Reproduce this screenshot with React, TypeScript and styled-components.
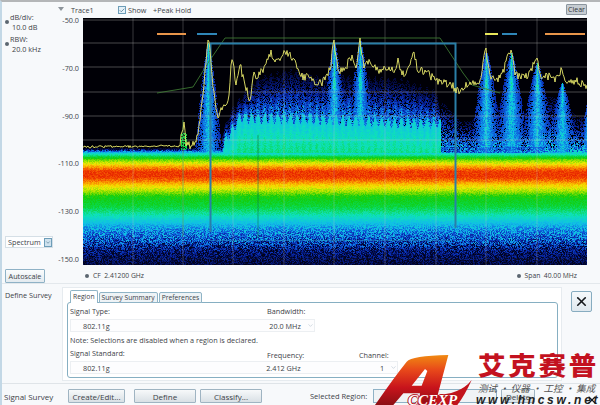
import React, { useEffect, useMemo, useRef } from "react";
import styled, { createGlobalStyle } from "styled-components";
import { Check, ChevronDown, X } from "lucide-react";

const Global = createGlobalStyle`
  html, body { margin: 0; padding: 0; background: #f4f7fa; }
  #root { width: 600px; height: 405px; overflow: hidden; }
  * { box-sizing: border-box; }
`;

const Page = styled.div`
  position: relative;
  width: 600px;
  height: 405px;
  overflow: hidden;
  display: flex;
  flex-direction: column;
  background: #f7f9fb;
  border-top: 2px solid #b4b6b8;
  border-left: 2px solid #c3d8e6;
  font-family: "Open Sans", "Noto Sans", sans-serif;
  font-size: 7.25px;
  color: #3c4248;
`;

const Chart = styled.section`
  display: grid;
  grid-template-columns: 54px 27px 504px 13px;
  grid-template-rows: 16px 247px 18px;
  height: 281px;
`;

const Controls = styled.div`
  grid-column: 1;
  grid-row: 1 / 4;
  display: flex;
  flex-direction: column;
  padding: 11px 0 0 3px;
`;

const Setting = styled.div`
  position: relative;
  padding-left: 5px;
  margin-bottom: 3px;
  line-height: 9.5px;
  &::before {
    content: "";
    position: absolute;
    left: 0;
    top: 7px;
    width: 4px;
    height: 4px;
    border-radius: 50%;
    background: #5b6670;
  }
`;

const SettingValue = styled.div`
  padding-left: 2px;
`;

const ViewSelect = styled.div`
  margin-top: auto;
  margin-bottom: 21px;
  width: 48px;
  height: 12px;
  display: flex;
  align-items: center;
  justify-content: space-between;
  padding-left: 2px;
  background: #fdfeff;
  border: 1px solid #d5dfe6;
`;

const MiniDrop = styled.span`
  width: 8px;
  height: 9px;
  display: flex;
  align-items: center;
  justify-content: center;
  background: #cfe2ee;
  border: 1px solid #6d9db8;
  color: #2d5c78;
`;

const Autoscale = styled.button`
  width: 40px;
  height: 14px;
  margin-bottom: 0;
  padding: 0;
  font: inherit;
  color: inherit;
  background: linear-gradient(#fbfcfd, #e3eaef);
  border: 1px solid #8fb2c6;
  border-radius: 1px;
`;

const TraceBar = styled.div`
  grid-column: 2 / 4;
  grid-row: 1;
  display: flex;
  align-items: center;
  padding-left: 2px;
  height: 16px;
`;

const Caret = styled.span`
  width: 0;
  height: 0;
  border-left: 3px solid transparent;
  border-right: 3px solid transparent;
  border-top: 4px solid #8d949b;
  margin-right: 7px;
  margin-top: -3px;
`;

const TraceName = styled.span`
  width: 47px;
`;

const CheckBox = styled.span`
  width: 8px;
  height: 8px;
  display: flex;
  align-items: center;
  justify-content: center;
  border: 1px solid #6d9db8;
  background: #e3f0f8;
  color: #2d5c78;
  margin-right: 2px;
`;

const ShowLabel = styled.span`
  width: 25px;
`;

const ClearCell = styled.div`
  grid-column: 3;
  grid-row: 1;
  justify-self: end;
  align-self: end;
  margin-bottom: 3px;
`;

const ClearButton = styled.button`
  display: block;
  width: 21px;
  height: 11px;
  padding: 0;
  font: inherit;
  font-size: 7px;
  line-height: 9px;
  color: #2f3438;
  background: #c6ccd2;
  border: 1px solid #8b959e;
  border-radius: 1px;
`;

const Axis = styled.div`
  grid-column: 2;
  grid-row: 2;
  display: flex;
  flex-direction: column;
  justify-content: space-between;
  align-items: flex-end;
  margin: -3px 0 1px;
  padding-right: 4px;
  line-height: 10px;
`;

const Plot = styled.div`
  grid-column: 3;
  grid-row: 2;
  position: relative;
  width: 504px;
  height: 247px;
  background: #000;
  overflow: hidden;
`;

const HeatCanvas = styled.canvas`
  display: block;
  width: 504px;
  height: 247px;
  filter: blur(0.35px);
`;

const Overlay = styled.svg`
  position: absolute;
  inset: 0;
`;

const PlotFooter = styled.div`
  grid-column: 3;
  grid-row: 3;
  display: flex;
  justify-content: space-between;
  align-items: center;
  padding: 3px 10px 0 2px;
  font-size: 6.75px;
`;

const FooterItem = styled.span`
  display: flex;
  align-items: center;
  gap: 4px;
  &::before {
    content: "";
    width: 4px;
    height: 4px;
    border-radius: 50%;
    background: #5b6670;
  }
`;

const Survey = styled.section`
  display: flex;
  height: 100px;
  border-top: 1px solid #e3e8ec;
`;

const SurveyTitle = styled.div`
  width: 60px;
  padding: 6px 0 0 3px;
`;

const Card = styled.div`
  width: 500px;
  height: 94px;
  margin-top: 3px;
  padding: 2px 3px 0 4px;
  background: #fff;
  border: 1px solid #e6ebef;
`;

const Tabs = styled.div`
  display: flex;
  gap: 1px;
  padding-left: 3px;
  height: 12px;
  position: relative;
  z-index: 1;
  font-size: 6.75px;
`;

const Tab = styled.span<{ $active?: boolean }>`
  height: ${(p) => (p.$active ? "13px" : "11px")};
  margin-top: ${(p) => (p.$active ? "0" : "2px")};
  padding: 0 2px;
  line-height: ${(p) => (p.$active ? "12px" : "10px")};
  background: ${(p) => (p.$active ? "#fff" : "#eef3f6")};
  border: 1px solid #8fb4c6;
  border-bottom: ${(p) => (p.$active ? "0" : "1px solid #8fb4c6")};
  border-radius: 2px 2px 0 0;
`;

const TabPanel = styled.div`
  height: 76px;
  padding: 3px 3px 0 2px;
  border: 1px solid #86afc2;
  border-radius: 3px;
  background: #fff;
  display: flex;
  flex-direction: column;
`;

const LabelRow = styled.div<{ $low?: boolean }>`
  display: grid;
  grid-template-columns: 197px 92px 60px;
  height: 11px;
  line-height: 11px;
  & > span:nth-child(2), & > span:nth-child(3) {
    position: relative;
    top: ${(p) => (p.$low ? "2px" : "0")};
  }
`;

const ValueRow = styled.div<{ $w: number }>`
  width: ${(p) => p.$w}px;
  height: 13px;
  margin-top: 2px;
  display: flex;
  align-items: center;
  padding-left: 12px;
  border: 1px solid #eceff2;
  background: #fdfdfe;
`;

const FieldValue = styled.span<{ $w: number }>`
  width: ${(p) => p.$w}px;
`;

const DropArrow = styled.span`
  display: flex;
  color: #9fb2c0;
`;

const Note = styled.div`
  margin: 3px 0 2px;
  line-height: 11px;
`;

const CloseButton = styled.button`
  width: 21px;
  height: 21px;
  margin: 7px 0 0 9px;
  padding: 0;
  display: flex;
  align-items: center;
  justify-content: center;
  color: #15181b;
  background: linear-gradient(#f6f9fb, #dfe8ee);
  border: 1px solid #87acc0;
  border-radius: 2px;
`;

const BottomBar = styled.footer`
  flex: 1;
  display: flex;
  align-items: center;
  border-top: 1px solid #dfe4e8;
  padding: 3px 0 0 2px;
`;

const BarTitle = styled.span`
  width: 64px;
  font-size: 8px;
`;

const Action = styled.button<{ $w: number; $gap: number }>`
  width: ${(p) => p.$w}px;
  height: 14px;
  margin-right: ${(p) => p.$gap}px;
  padding: 0;
  font: inherit;
  font-size: 8px;
  color: #3c4248;
  background: linear-gradient(#f7f9fa, #d9e0e5);
  border: 1px solid #9fb4c2;
  border-radius: 1px;
`;

const RegionLabel = styled.span`
  margin-left: 48px;
  width: 63px;
  font-size: 7.5px;
`;

const RegionBox = styled.span`
  width: 124px;
  height: 14px;
  border: 1px solid #8fb2c6;
  background: #f0f3f5;
  margin-right: 4px;
`;

const Brand = styled.div`
  position: absolute;
  left: 368px;
  top: 343px;
  width: 230px;
  height: 60px;
  overflow: hidden;
`;

const BrandMark = styled.svg`
  position: absolute;
  inset: 0;
`;

const BrandX = styled.span`
  position: absolute;
  right: 2px;
  bottom: -1px;
  display: flex;
  color: #15181b;
`;

const BrandName = styled.div`
  position: absolute;
  left: 108px;
  top: 7px;
  font-family: "Noto Sans CJK SC", sans-serif;
  font-weight: 900;
  font-size: 25px;
  line-height: 25px;
  letter-spacing: 2.5px;
  white-space: nowrap;
  color: #c3121f;
  transform: scaleX(1.1);
  transform-origin: left center;
`;

const BrandTag = styled.div`
  position: absolute;
  left: 108px;
  top: 37px;
  font-family: "Noto Sans CJK SC", sans-serif;
  font-size: 9.5px;
  line-height: 12px;
  font-style: italic;
  white-space: nowrap;
  color: #555;
`;

const BrandUrl = styled.div`
  position: absolute;
  left: 106px;
  top: 49px;
  font-family: "Liberation Sans", sans-serif;
  font-size: 12px;
  line-height: 12px;
  font-weight: 700;
  font-style: italic;
  letter-spacing: 2.7px;
  white-space: nowrap;
  color: #222;
`;

const BrandLatin = styled.div`
  position: absolute;
  left: 38px;
  top: 48px;
  font-family: "Liberation Serif", serif;
  font-size: 15px;
  line-height: 15px;
  font-weight: 700;
  font-style: italic;
  white-space: nowrap;
  color: #fff;
  text-shadow: 1px 0 0 #b5121b, -1px 0 0 #b5121b, 0 1px 0 #b5121b, 0 -1px 0 #b5121b;
`;

const W = 504;
const H = 247;
const OX = 83;
const OY = 18;

function rng(seed: number) {
  let a = seed;
  return () => {
    a |= 0;
    a = (a + 0x6d2b79f5) | 0;
    let t = Math.imul(a ^ (a >>> 15), 1 | a);
    t = (t + Math.imul(t ^ (t >>> 7), 61 | t)) ^ t;
    return ((t ^ (t >>> 14)) >>> 0) / 4294967296;
  };
}

function lerpTable(tbl: number[][], x: number) {
  if (x <= tbl[0][0]) return tbl[0][1];
  for (let i = 1; i < tbl.length; i++) {
    if (x <= tbl[i][0]) {
      const [a, b] = tbl[i - 1];
      const [c, d] = tbl[i];
      return b + ((d - b) * (x - a)) / (c - a);
    }
  }
  return tbl[tbl.length - 1][1];
}

const colorStops: [number, number, number, number][] = [
  [0, 0, 0, 6],
  [0.08, 2, 8, 60],
  [0.18, 8, 40, 170],
  [0.28, 15, 105, 225],
  [0.36, 16, 190, 230],
  [0.43, 14, 225, 185],
  [0.5, 10, 215, 70],
  [0.56, 20, 205, 10],
  [0.64, 150, 225, 0],
  [0.71, 240, 232, 0],
  [0.8, 250, 165, 0],
  [0.9, 242, 70, 0],
  [1, 225, 20, 0],
];

function jet(v: number): [number, number, number] {
  const c = Math.max(0, Math.min(1, v));
  for (let i = 1; i < colorStops.length; i++) {
    if (c <= colorStops[i][0]) {
      const a = colorStops[i - 1];
      const b = colorStops[i];
      const t = (c - a[0]) / (b[0] - a[0]);
      return [a[1] + (b[1] - a[1]) * t, a[2] + (b[2] - a[2]) * t, a[3] + (b[3] - a[3]) * t];
    }
  }
  return [225, 20, 0];
}

const bandTable = [
  [147, 0], [149.5, 0.14], [151, 0.3], [153, 0.4], [156, 0.5], [159, 0.6], [163, 0.7],
  [167, 0.82], [171, 0.92], [176, 0.93], [180, 0.86], [185, 0.74], [190, 0.66], [196, 0.56],
  [206, 0.51], [214, 0.44], [222, 0.37], [230, 0.31], [238, 0.25], [244, 0.19], [250, 0.13],
  [265, 0.07],
];
const plateauTop = [
  [222, 132], [232, 108], [245, 92], [258, 78], [290, 70], [320, 78], [340, 76], [400, 80],
  [425, 88], [437, 92], [441, 125],
];
const plateauFloor = [[222, 146], [228, 136], [240, 118], [300, 119], [380, 122], [437, 124]];
const peaks = [
  { x: 208, top: 42, w: 13 },
  { x: 334, top: 42, w: 14 },
  { x: 360, top: 40, w: 14 },
  { x: 486, top: 52, w: 16 },
  { x: 511, top: 52, w: 17 },
  { x: 537, top: 62, w: 17 },
  { x: 562, top: 82, w: 15 },
  { x: 588, top: 100, w: 8 },
];

function pixelValue(x: number, y: number, r: () => number) {
  const r1 = r();
  const r2 = r();
  let v = 0;
  const b = lerpTable(bandTable, y);
  if (b > 0) {
    const k = Math.max(0, Math.min(1, (0.36 - b) / 0.18)) * 1.5 + 0.1;
    v = b * (1 + (r1 - 0.5) * k);
  }
  let s = 0;
  if (y < 153) {
    if (x >= 222 && x <= 440) {
      const t = lerpTable(plateauTop, x);
      const f0 = lerpTable(plateauFloor, x);
      const comb = 5 * Math.cos((2 * Math.PI * (x - 222)) / 6.5);
      const top = t + comb * 0.5;
      const floor = f0 + comb;
      if (y > floor) {
        s = 0.38 + (0.06 * (y - floor)) / 25 + (r2 - 0.5) * 0.04;
      } else if (y > top) {
        const f = (y - top) / (floor - top);
        if (r2 < 0.55 + 0.45 * f) s = 0.07 + 0.27 * Math.pow(f, 1.15) * (0.5 + r1 * 0.8);
      }
    } else if (x > 440) {
      const t = 108 + 8 * Math.sin(x / 9) + 5 * Math.sin(x / 23);
      if (y > t) {
        const f = (y - t) / (150 - t);
        if (r2 < 0.4 + 0.5 * f) s = 0.08 + 0.24 * f * (0.5 + r1);
      }
    }
    for (const p of peaks) {
      if (y > p.top) {
        const w = p.w * Math.pow((y - p.top) / (150 - p.top), 0.75) + 0.6;
        const dx = Math.abs(x - p.x);
        if (dx < w) {
          const q = 1 - dx / w;
          if (r2 < 0.6 + 0.6 * q) {
            const pv = 0.17 + 0.2 * q * (0.7 + r1 * 0.6) + (q > 0.85 && y < 90 ? 0.05 : 0);
            s = Math.max(s, pv);
          }
        }
      }
    }
    if (x > 180 && x < 187 && y > 132 && y < 150 && r1 < 0.6) s = Math.max(s, 0.5);
    if (x > 440 && x < 545 && y > 146) return Math.max(s * 0.85, r1 * 0.26);
  }
  return Math.max(v, s);
}

const tracePoints = [
  [83, 147], [180, 146], [182, 132], [184, 122], [186, 146], [192, 146], [196, 142], [198, 135],
  [200, 120], [203, 95], [205, 70], [207, 50], [208, 40], [210, 50], [212, 75], [215, 100],
  [218, 118], [222, 110], [226, 105], [229, 95], [231, 65], [233, 62], [236, 85], [240, 65],
  [245, 85], [250, 100], [254, 72], [258, 78], [265, 65], [271, 50], [275, 62], [285, 52],
  [295, 60], [300, 75], [310, 78], [318, 85], [325, 80], [330, 70], [334, 40], [338, 70],
  [345, 68], [352, 55], [356, 68], [360, 38], [364, 68], [370, 62], [378, 70], [395, 70],
  [398, 58], [402, 75], [410, 65], [414, 52], [418, 72], [425, 70], [435, 80], [445, 82],
  [455, 88], [460, 92], [470, 82], [480, 80], [486, 48], [490, 75], [500, 78], [511, 50],
  [515, 75], [525, 78], [537, 58], [541, 78], [550, 75], [555, 82], [562, 70], [566, 82],
  [575, 80], [587, 85],
];

function buildTrace() {
  const r = rng(77);
  const pts: string[] = [];
  for (let x = 83; x <= 587; x++) {
    const base = lerpTable(tracePoints, x);
    const isKey = tracePoints.some((p) => p[0] === x);
    const amp = x < 180 ? 2.4 : 9;
    const n = isKey ? 0 : (r() - 0.5) * amp;
    pts.push(`${x},${(base + n).toFixed(1)}`);
  }
  return pts.join(" ");
}

const Heatmap: React.FC = () => {
  const ref = useRef<HTMLCanvasElement>(null);
  useEffect(() => {
    const ctx = ref.current?.getContext("2d");
    if (!ctx) return;
    const img = ctx.createImageData(W, H);
    const r = rng(1234);
    for (let j = 0; j < H; j++) {
      for (let i = 0; i < W; i++) {
        const [cr, cg, cb] = jet(pixelValue(i + OX, j + OY, r));
        const k = (j * W + i) * 4;
        img.data[k] = cr;
        img.data[k + 1] = cg;
        img.data[k + 2] = cb;
        img.data[k + 3] = 255;
      }
    }
    ctx.putImageData(img, 0, 0);
  }, []);
  return <HeatCanvas ref={ref} width={W} height={H} />;
};

const gridX = [133, 183, 233, 284, 334, 385, 436, 486, 537];
const gridY = [20, 43, 67, 92, 116, 140, 164, 188, 212, 236, 259];

const PlotOverlay: React.FC = () => {
  const trace = useMemo(buildTrace, []);
  return (
    <Overlay width={W} height={H} viewBox={`0 0 ${W} ${H}`}>
      <g transform={`translate(${-OX} ${-OY})`}>
        {gridX.map((x) => (
          <line key={x} x1={x} x2={x} y1={OY} y2={OY + H} stroke="#c8c8c8" strokeOpacity={0.28} />
        ))}
        {gridY.map((y) => (
          <line key={y} x1={OX} x2={OX + W} y1={y} y2={y} stroke="#c8c8c8" strokeOpacity={y > 150 ? 0.05 : 0.36} />
        ))}
        <line x1={183} x2={183} y1={120} y2={236} stroke="#2f9a3a" strokeOpacity={0.5} />
        <line x1={258} x2={258} y1={135} y2={238} stroke="#0c7a50" strokeOpacity={0.6} />
        <polyline
          points="157,93 193,87 208,63 225,38 440,38 463,73 472,85 500,93"
          fill="none"
          stroke="#3f7d35"
          strokeWidth={1}
          strokeOpacity={0.85}
        />
        <path d="M210.5 232V43.5H455.5V228" fill="none" stroke="#2a7fa8" strokeWidth={2} />
        <line x1={210} x2={450} y1={240.5} y2={240.5} stroke="#2a8ac0" strokeOpacity={0.55} />
        <line x1={157} x2={186} y1={34} y2={34} stroke="#e8954a" strokeWidth={2} />
        <line x1={197} x2={217} y1={34} y2={34} stroke="#2f86b8" strokeWidth={2} />
        <line x1={485} x2={498} y1={34} y2={34} stroke="#e8e65a" strokeWidth={2} />
        <line x1={502} x2={517} y1={34} y2={34} stroke="#2f86b8" strokeWidth={2} />
        <line x1={545} x2={585} y1={34} y2={34} stroke="#e8954a" strokeWidth={2} />
        <polyline points={trace} fill="none" stroke="#eaea6c" strokeWidth={0.9} strokeLinejoin="round" />
      </g>
    </Overlay>
  );
};

const Arrow: React.FC = () => (
  <DropArrow>
    <ChevronDown size={7} strokeWidth={1.5} />
  </DropArrow>
);

export default function App() {
  return (
    <Page>
      <Global />
      <Chart>
        <Controls>
          <Setting>
            dB/div:
            <SettingValue>10.0 dB</SettingValue>
          </Setting>
          <Setting>
            RBW:
            <SettingValue>20.0 kHz</SettingValue>
          </Setting>
          <ViewSelect>
            Spectrum
            <MiniDrop>
              <ChevronDown size={7} strokeWidth={2} />
            </MiniDrop>
          </ViewSelect>
          <Autoscale>Autoscale</Autoscale>
        </Controls>
        <TraceBar>
          <Caret />
          <TraceName>Trace1</TraceName>
          <CheckBox>
            <Check size={7} strokeWidth={2.5} />
          </CheckBox>
          <ShowLabel>Show</ShowLabel>
          <span>+Peak Hold</span>
        </TraceBar>
        <ClearCell>
          <ClearButton>Clear</ClearButton>
        </ClearCell>
        <Axis>
          {["-50.0", "-70.0", "-90.0", "-110.0", "-130.0", "-150.0"].map((l) => (
            <span key={l}>{l}</span>
          ))}
        </Axis>
        <Plot>
          <Heatmap />
          <PlotOverlay />
        </Plot>
        <PlotFooter>
          <FooterItem>CF&nbsp;&nbsp;2.41200 GHz</FooterItem>
          <FooterItem>Span&nbsp;&nbsp;40.00 MHz</FooterItem>
        </PlotFooter>
      </Chart>
      <Survey>
        <SurveyTitle>Define Survey</SurveyTitle>
        <Card>
          <Tabs>
            <Tab $active>Region</Tab>
            <Tab>Survey Summary</Tab>
            <Tab>Preferences</Tab>
          </Tabs>
          <TabPanel>
            <LabelRow>
              <span>Signal Type:</span>
              <span>Bandwidth:</span>
            </LabelRow>
            <ValueRow $w={245}>
              <FieldValue $w={188}>802.11g</FieldValue>
              <FieldValue $w={38}>20.0 MHz</FieldValue>
              <Arrow />
            </ValueRow>
            <Note>Note: Selections are disabled when a region is declared.</Note>
            <LabelRow $low>
              <span>Signal Standard:</span>
              <span>Frequency:</span>
              <span>Channel:</span>
            </LabelRow>
            <ValueRow $w={328}>
              <FieldValue $w={185}>802.11g</FieldValue>
              <FieldValue $w={115}>2.412 GHz</FieldValue>
              <FieldValue $w={10}>1</FieldValue>
              <Arrow />
            </ValueRow>
          </TabPanel>
        </Card>
        <CloseButton>
          <X size={15} strokeWidth={2.6} />
        </CloseButton>
      </Survey>
      <BottomBar>
        <BarTitle>Signal Survey</BarTitle>
        <Action $w={57} $gap={9}>Create/Edit...</Action>
        <Action $w={62} $gap={4}>Define</Action>
        <Action $w={62} $gap={0}>Classify...</Action>
        <RegionLabel>Selected Region:</RegionLabel>
        <RegionBox />
        <Action $w={34} $gap={0}>Delete</Action>
      </BottomBar>
      <Brand>
        <BrandMark width={230} height={60} viewBox="0 0 690 180">
          <defs>
            <linearGradient id="logoFill" x1="0" y1="0" x2="0" y2="1">
              <stop offset="0" stopColor="#f08a12" />
              <stop offset="0.3" stopColor="#e8481a" />
              <stop offset="0.65" stopColor="#c8141c" />
              <stop offset="1" stopColor="#8c0f14" />
            </linearGradient>
          </defs>
          <path
            fill="url(#logoFill)"
            fillRule="evenodd"
            d="M110 50Q125 32 235 30L195 180H145L150 145H100L70 180H15Q70 100 110 50ZM165 72L125 122H155L172 78Z"
          />
          <path fill="#c2141c" d="M305 105Q270 150 190 150L180 180H262Q285 150 305 105Z" />
        </BrandMark>
        <BrandLatin>CCEXP</BrandLatin>
        <BrandName>艾克赛普</BrandName>
        <BrandTag>测试 · 仪器 · 工控 · 集成</BrandTag>
        <BrandUrl>www.hncsw.net</BrandUrl>
        <BrandX>
          <X size={12} strokeWidth={2.2} />
        </BrandX>
      </Brand>
    </Page>
  );
}
